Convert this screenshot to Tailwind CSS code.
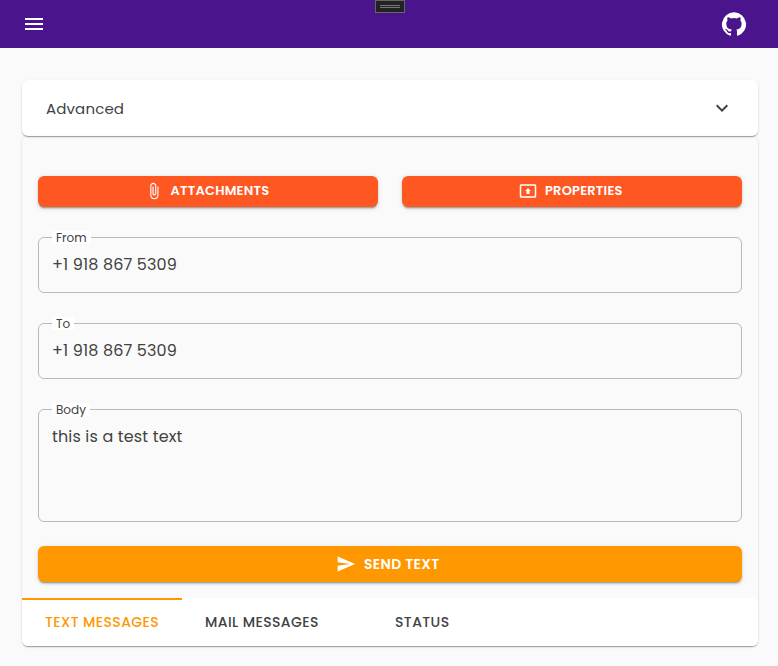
<!DOCTYPE html>
<html lang="en">
<head>
<meta charset="utf-8">
<title>Messages</title>
<script src="https://cdn.jsdelivr.net/npm/@tailwindcss/browser@4"></script>
</head>
<body class="h-[666px] overflow-hidden bg-[#fafafa] font-[Poppins,Inter,sans-serif] text-[#424242]">
<header class="relative flex h-12 items-center justify-between bg-[#4a148c] pl-[22px] pr-8 text-white">
  <svg class="size-6" viewBox="0 0 24 24" fill="currentColor"><path d="M3 18h18v-2H3v2zm0-5h18v-2H3v2zm0-7v2h18V6H3z"/></svg>
  <div class="absolute left-[375px] top-0 flex h-[13px] w-[30px] flex-col items-center justify-center gap-px border border-[#666] bg-[#222]">
    <i class="h-px w-5 bg-[#777]"></i><i class="h-px w-5 bg-[#777]"></i>
  </div>
  <svg class="size-6" viewBox="0 0 24 24" fill="currentColor"><path d="M12 .3a12 12 0 0 0-3.8 23.4c.6.1.8-.3.8-.6v-2c-3.3.7-4-1.6-4-1.6-.6-1.4-1.4-1.8-1.4-1.8-1-.7.1-.7.1-.7 1.2 0 1.9 1.2 1.9 1.2 1 1.8 2.8 1.3 3.5 1 0-.8.4-1.3.7-1.6-2.7-.3-5.5-1.3-5.5-6 0-1.2.5-2.3 1.3-3.1-.2-.4-.6-1.6 0-3.2 0 0 1-.3 3.4 1.2a11.5 11.5 0 0 1 6 0c2.3-1.5 3.3-1.2 3.3-1.2.6 1.6.2 2.8 0 3.2.9.8 1.3 1.9 1.3 3.2 0 4.6-2.8 5.6-5.5 5.9.5.4.9 1 .9 2.2v3.3c0 .3.1.7.8.6A12 12 0 0 0 12 .3"/></svg>
</header>
<main class="pl-[22px] pr-5 pt-8">
  <section class="flex h-14 items-center justify-between rounded-md bg-white px-6 shadow-[0_2px_1px_-1px_rgba(0,0,0,.2),0_1px_1px_0_rgba(0,0,0,.14),0_1px_3px_0_rgba(0,0,0,.12)]">
    <span class="pt-px text-[15px] leading-6 tracking-[0.15px]">Advanced</span>
    <svg class="size-6" viewBox="0 0 24 24" fill="currentColor"><path d="M16.59 8.59L12 13.17 7.41 8.59 6 10l6 6 6-6z"/></svg>
  </section>
  <section class="h-[510px] rounded-md pt-10 shadow-[0_2px_1px_-1px_rgba(0,0,0,.2),0_1px_1px_0_rgba(0,0,0,.14),0_1px_3px_0_rgba(0,0,0,.12)]">
    <div class="px-4">
      <div class="grid grid-cols-2 gap-6 text-[13px] font-semibold leading-[31px] tracking-[0.21px] text-white">
        <button class="flex h-[31px] items-center rounded-md bg-[#ff5722] pl-[107px] shadow-[0_3px_1px_-2px_rgba(0,0,0,.2),0_2px_2px_0_rgba(0,0,0,.14),0_1px_5px_0_rgba(0,0,0,.12)]">
          <svg class="relative -top-px mr-[7.5px] size-[18px]" viewBox="0 0 24 24" fill="currentColor"><path d="M16.5 6v11.5c0 2.21-1.79 4-4 4s-4-1.79-4-4V5c0-1.38 1.12-2.5 2.5-2.5s2.5 1.12 2.5 2.5v10.5c0 .55-.45 1-1 1s-1-.45-1-1V6H10v9.5c0 1.38 1.12 2.5 2.5 2.5s2.5-1.12 2.5-2.5V5c0-2.21-1.79-4-4-4S7 2.79 7 5v12.5c0 3.04 2.46 5.5 5.5 5.5s5.5-2.46 5.5-5.5V6h-1.5z"/></svg>
          <span class="relative -top-px">ATTACHMENTS</span>
        </button>
        <button class="flex h-[31px] items-center rounded-md bg-[#ff5722] pl-[117px] shadow-[0_3px_1px_-2px_rgba(0,0,0,.2),0_2px_2px_0_rgba(0,0,0,.14),0_1px_5px_0_rgba(0,0,0,.12)]">
          <svg class="relative -top-px mr-2 size-[18px]" viewBox="0 0 24 24" fill="currentColor"><path d="M21 3H3c-1.11 0-2 .89-2 2v14c0 1.11.89 2 2 2h18c1.11 0 2-.89 2-2V5c0-1.11-.89-2-2-2zm0 16.02H3V4.98h18v14.04zM10 12H8l4-4 4 4h-2v4h-4v-4z"/></svg>
          <span class="relative -top-px">PROPERTIES</span>
        </button>
      </div>
      <div class="relative mt-[30px] h-14 rounded-md border border-[#bababa] px-[13px] pt-[15px] leading-6">
        <span class="absolute -top-[7px] left-[13px] bg-white px-1 text-xs leading-[13px]">From</span>
        <span class="tracking-[0.15px]">+1 918 867 5309</span>
      </div>
      <div class="relative mt-[30px] h-14 rounded-md border border-[#bababa] px-[13px] pt-[15px] leading-6">
        <span class="absolute -top-[7px] left-[13px] bg-white px-1 text-xs leading-[13px]">To</span>
        <span class="tracking-[0.15px]">+1 918 867 5309</span>
      </div>
      <div class="relative mt-[30px] h-[113px] rounded-md border border-[#bababa] px-[13px] pt-[15px] leading-6">
        <span class="absolute -top-[7px] left-[13px] bg-white px-1 text-xs leading-[13px]">Body</span>
        <span class="tracking-[0.15px]">this is a test text</span>
      </div>
      <button class="mt-6 flex h-9 w-full items-center rounded-md bg-[#ff9800] pl-[298px] text-sm font-semibold tracking-[0.3px] text-white shadow-[0_3px_1px_-2px_rgba(0,0,0,.2),0_2px_2px_0_rgba(0,0,0,.14),0_1px_5px_0_rgba(0,0,0,.12)]">
        <svg class="mr-2 size-5" viewBox="0 0 24 24" fill="currentColor"><path d="M2.01 21L23 12 2.01 3 2 10l15 2-15 2z"/></svg>
        <span>SEND TEXT</span>
      </button>
    </div>
    <nav class="mt-4 flex h-12 rounded-md bg-white text-sm font-medium leading-[48px] tracking-[0.4px]">
      <div class="relative w-40 pl-[23px] text-[#ff9800]"><i class="absolute left-0 top-0 h-0.5 w-40 bg-[#ff9800]"></i><span>TEXT MESSAGES</span></div>
      <div class="w-40 pl-[23px]"><span>MAIL MESSAGES</span></div>
      <div class="w-40 pl-[53px]"><span>STATUS</span></div>
    </nav>
  </section>
</main>
</body>
</html>
